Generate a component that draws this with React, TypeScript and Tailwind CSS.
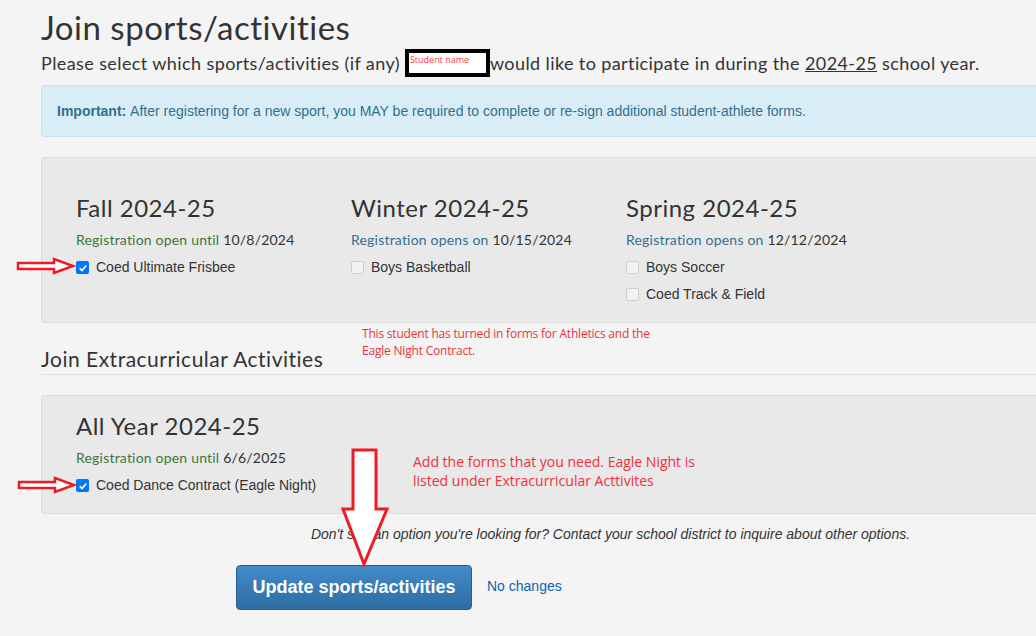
import React from "react";

const heading = { fontFamily: "Lato, 'Noto Sans', sans-serif" };

type Item = { label: string; checked?: boolean };

const CheckRow = ({ label, checked }: Item) => (
  <label className="flex items-center gap-[7px] h-[27px] text-[14px] text-[#333] font-['Liberation_Sans',Arial,sans-serif]">
    {checked ? (
      <span className="w-[13px] h-[13px] rounded-[2px] bg-[#0075ff] flex items-center justify-center">
        <svg viewBox="0 0 12 12" className="w-[10px] h-[10px]">
          <path d="M2 6.2 L4.8 9 L10 3" fill="none" stroke="white" strokeWidth="2" />
        </svg>
      </span>
    ) : (
      <span className="w-[13px] h-[13px] rounded-[2px] border border-[#cfcfcf] bg-[#f2f2f2]" />
    )}
    {label}
  </label>
);

type Season = {
  title: string;
  status: string;
  date: string;
  open: boolean;
  items: Item[];
};

const SeasonColumn = ({ season }: { season: Season }) => (
  <div className="w-[275px] shrink-0">
    <h3 className="text-[24px] leading-[30px] tracking-[0.5px] text-[#333]" style={heading}>
      {season.title}
    </h3>
    <p className="mt-[7px] mb-[4px] text-[14px] leading-[20px] tracking-[0.2px]" style={heading}>
      <span className={season.open ? "text-[#3c763d]" : "text-[#31708f]"}>{season.status}</span>
      <span className="text-[#333]"> {season.date}</span>
    </p>
    {season.items.map((it) => (
      <CheckRow key={it.label} {...it} />
    ))}
  </div>
);

const RightArrow = ({ className }: { className: string }) => (
  <svg viewBox="0 0 60 18" className={className}>
    <polygon
      points="2,6 38,6 38,2 57,9 38,16 38,12 2,12"
      fill="white"
      stroke="#ed1c24"
      strokeWidth="2.5"
      strokeLinejoin="miter"
    />
  </svg>
);

const sports: Season[] = [
  {
    title: "Fall 2024-25",
    status: "Registration open until",
    date: "10/8/2024",
    open: true,
    items: [{ label: "Coed Ultimate Frisbee", checked: true }],
  },
  {
    title: "Winter 2024-25",
    status: "Registration opens on",
    date: "10/15/2024",
    open: false,
    items: [{ label: "Boys Basketball" }],
  },
  {
    title: "Spring 2024-25",
    status: "Registration opens on",
    date: "12/12/2024",
    open: false,
    items: [{ label: "Boys Soccer" }, { label: "Coed Track & Field" }],
  },
];

const extra: Season = {
  title: "All Year 2024-25",
  status: "Registration open until",
  date: "6/6/2025",
  open: true,
  items: [{ label: "Coed Dance Contract (Eagle Night)", checked: true }],
};

export default function App() {
  return (
    <div className="relative w-[1036px] h-[636px] overflow-hidden bg-[#f4f4f4]">
      <div className="w-[1139px] ml-[41px]">
        {/* Title */}
        <h1 className="pt-[8px] text-[33px] leading-[38px] tracking-[0.5px] text-[#333]" style={heading}>
          Join sports/activities
        </h1>
        <div className="flex items-center h-[34px] text-[18px] tracking-[0.4px] text-[#333]" style={heading}>
          <span>Please select which sports/activities (if any)&nbsp;</span>
          <span className="w-[85px] h-[28px] border-[4px] border-black bg-white flex items-start px-[1px] text-[9px] leading-[14px] tracking-normal text-[#ff3b4a] font-['Open_Sans',sans-serif]">
            Student name
          </span>
          <span>
            would like to participate in during the <span className="underline">2024-25</span> school year.
          </span>
        </div>

        {/* Alert */}
        <div className="mt-[5px] h-[52px] flex items-center pl-[15px] bg-[#d9edf7] border border-[#bce8f1] rounded-[3px] text-[14px] text-[#31708f] font-['Liberation_Sans',Arial,sans-serif]">
          <b>Important:</b>&nbsp;After registering for a new sport, you MAY be required to complete or re-sign additional student-athlete forms.
        </div>

        {/* Sports panel */}
        <div className="mt-[20px] h-[166px] pt-[35px] pl-[34px] flex bg-[#e9e9e9] border border-[#dcdcdc] rounded-[3px]">
          {sports.map((s) => (
            <SeasonColumn key={s.title} season={s} />
          ))}
        </div>

        {/* Extracurricular */}
        <div className="h-[52px] border-b border-[#e2e2e2]">
          <h2 className="pt-[23px] text-[21px] leading-[26px] tracking-[0.5px] text-[#333]" style={heading}>
            Join Extracurricular Activities
          </h2>
        </div>
        <div className="mt-[20px] h-[119px] pt-[15px] pl-[34px] flex bg-[#e9e9e9] border border-[#dcdcdc] rounded-[3px]">
          <SeasonColumn season={extra} />
        </div>

        <p className="mt-[10px] text-center text-[14px] italic text-[#333] font-['Liberation_Sans',Arial,sans-serif]">
          Don't see an option you're looking for? Contact your school district to inquire about other options.
        </p>

        <div className="mt-[20px] pl-[195px] flex items-center gap-[15px]">
          <button className="w-[236px] h-[45px] rounded-[4px] border border-[#285e8e] bg-gradient-to-b from-[#428bca] to-[#2d6da3] text-white text-[18px] font-bold font-['Liberation_Sans',Arial,sans-serif]">
            Update sports/activities
          </button>
          <a className="text-[14px] text-[#0b63b6] font-['Liberation_Sans',Arial,sans-serif] -mt-[2px]">No changes</a>
        </div>
      </div>

      {/* Annotations */}
      <p className="absolute left-[362px] top-[325px] text-[12px] leading-[17px] text-[#f0303d] font-['Open_Sans',sans-serif] tracking-[-0.2px]">
        This student has turned in forms for Athletics and the
        <br />
        Eagle Night Contract.
      </p>
      <p className="absolute left-[413px] top-[452px] text-[14px] leading-[19px] text-[#f0303d] font-['Open_Sans',sans-serif] tracking-[0px]">
        Add the forms that you need. Eagle Night is
        <br />
        listed under Extracurricular Acttivites
      </p>
      <RightArrow className="absolute left-[16px] top-[257px] w-[60px] h-[18px]" />
      <RightArrow className="absolute left-[17px] top-[476px] w-[60px] h-[18px]" />
      <svg viewBox="0 0 50 120" className="absolute left-[340px] top-[448px] w-[50px] h-[120px]">
        <polygon
          points="13,2 36,2 36,61 47,61 24,116 3,61 13,61"
          fill="white"
          stroke="#ed1c24"
          strokeWidth="3"
        />
      </svg>
    </div>
  );
}
